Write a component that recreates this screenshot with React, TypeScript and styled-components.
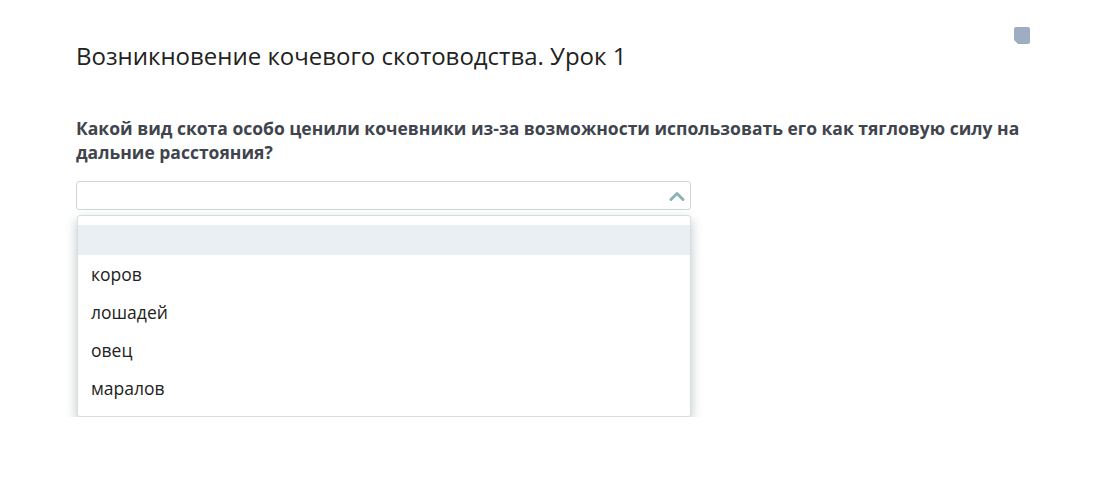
import styled, { createGlobalStyle } from "styled-components";

const options = ["", "коров", "лошадей", "овец", "маралов"];

const GlobalStyle = createGlobalStyle`
  html, body {
    margin: 0;
    padding: 0;
    background: #ffffff;
    font-family: "Open Sans", "Noto Sans", sans-serif;
  }
`;

export default function App() {
  return (
    <Page>
      <GlobalStyle />
      <Header>
        <Title>Возникновение кочевого скотоводства. Урок 1</Title>
        <NoteIcon width="16" height="17" viewBox="0 0 16 17">
          <path d="M2 0 H14 Q16 0 16 2 V15 Q16 17 14 17 H4 L0 13 V2 Q0 0 2 0 Z" fill="#9eaec2" />
        </NoteIcon>
      </Header>
      <Question>
        Какой вид скота особо ценили кочевники из-за возможности использовать его как тягловую силу на
        дальние расстояния?
      </Question>
      <SelectWrap>
        <SelectBox>
          <Chevron width="16" height="10" viewBox="0 0 16 10">
            <path d="M2 8.5 L8 2.5 L14 8.5" fill="none" stroke="#8db2b8" strokeWidth="3" strokeLinecap="round" strokeLinejoin="round" />
          </Chevron>
        </SelectBox>
        <Menu>
          {options.map((o, i) => (
            <Option key={i} $active={i === 0} $empty={o === ""}>
              {o}
            </Option>
          ))}
        </Menu>
      </SelectWrap>
    </Page>
  );
}

const Page = styled.div`
  padding: 27px 66px 0 76px;
  width: 1096px;
  box-sizing: border-box;
`;

const Header = styled.div`
  display: flex;
  justify-content: space-between;
  align-items: flex-start;
`;

const Title = styled.h1`
  margin: 13px 0 0;
  font-size: 24px;
  font-weight: 400;
  line-height: 32px;
  color: #222222;
`;

const NoteIcon = styled.svg`
  display: block;
`;

const Question = styled.p`
  margin: 44px 0 0;
  font-size: 17.5px;
  font-weight: 700;
  line-height: 24px;
  color: #40444d;
`;

const SelectWrap = styled.div`
  width: 615px;
  margin-top: 17px;
  display: flex;
  flex-direction: column;
  gap: 5px;
`;

const SelectBox = styled.div`
  height: 29px;
  box-sizing: border-box;
  border: 1px solid #cbd7d8;
  border-radius: 3px;
  display: flex;
  align-items: center;
  justify-content: flex-end;
  padding-right: 5px;
  background: #ffffff;
`;

const Chevron = styled.svg`
  display: block;
`;

const Menu = styled.div`
  margin-left: 1px;
  border: 1px solid #d6dede;
  border-radius: 3px;
  background: #ffffff;
  box-shadow: 0 5px 12px rgba(40, 60, 60, 0.3);
  padding: 9px 0 9px;
  display: flex;
  flex-direction: column;
`;

const Option = styled.div<{ $active: boolean; $empty: boolean }>`
  height: ${(p) => (p.$empty ? "30px" : "38px")};
  display: flex;
  align-items: center;
  padding-left: 13px;
  font-size: 17.5px;
  color: #222222;
  background: ${(p) => (p.$active ? "#e9f0f3" : "transparent")};
`;
